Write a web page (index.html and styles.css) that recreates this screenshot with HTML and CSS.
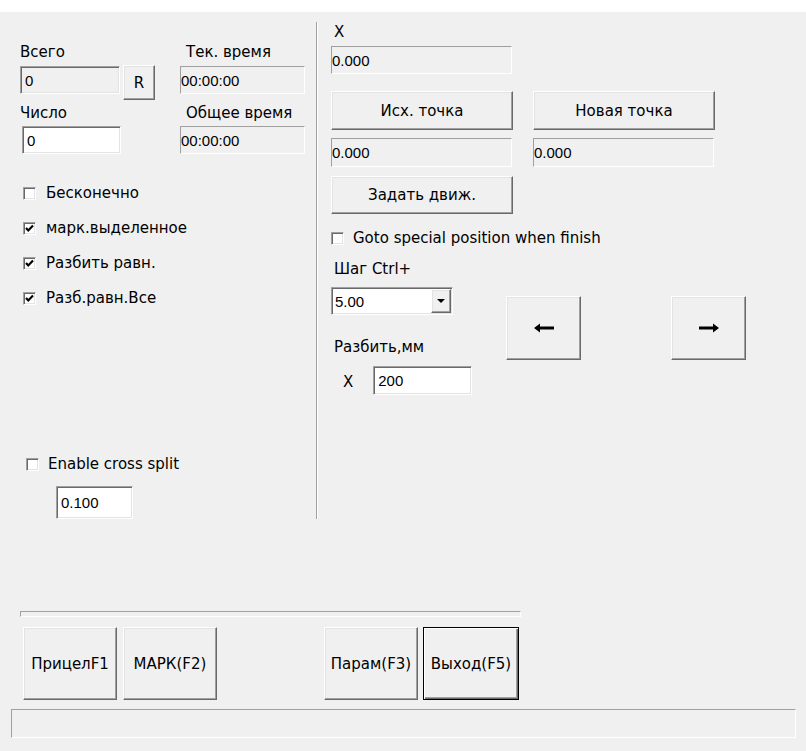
FILE: index.html
```html
<!DOCTYPE html>
<html lang="ru">
<head>
  <meta charset="UTF-8" />
  <title>Mark</title>
  <link rel="stylesheet" href="styles.css">
</head>
<body>

  <div class="titlebar"><div class="titlebar-text">Mark</div></div>

  <div class="panels">
    <div class="left-panel">
      <div class="counters">
        <div class="label">Всего</div>
        <div></div>
        <div class="label label-time">Тек. время</div>

        <input class="edit edit-total" value="0" disabled>
        <button class="btn btn-reset">R</button>
        <div class="static">00:00:00</div>

        <div class="label label-low">Число</div>
        <div></div>
        <div class="label label-time label-low">Общее время</div>

        <input class="edit edit-count" value="0">
        <div></div>
        <div class="static">00:00:00</div>
      </div>

      <div class="options">
        <div class="option"><span class="check"></span>Бесконечно</div>
        <div class="option">
          <span class="check"><svg width="11" height="11" viewBox="0 0 11 11"><path d="M2 5 L4.3 7.5 L9 2.6" fill="none" stroke="#000" stroke-width="2.2"/></svg></span>марк.выделенное
        </div>
        <div class="option">
          <span class="check"><svg width="11" height="11" viewBox="0 0 11 11"><path d="M2 5 L4.3 7.5 L9 2.6" fill="none" stroke="#000" stroke-width="2.2"/></svg></span>Разбить равн.
        </div>
        <div class="option">
          <span class="check"><svg width="11" height="11" viewBox="0 0 11 11"><path d="M2 5 L4.3 7.5 L9 2.6" fill="none" stroke="#000" stroke-width="2.2"/></svg></span>Разб.равн.Все
        </div>
      </div>

      <div class="option option-cross"><span class="check"></span>Enable cross split</div>
      <input class="edit edit-cross" value="0.100">
    </div>

    <div class="vsep"></div>

    <div class="right-panel">
      <div class="label label-right">X</div>
      <div class="static static-wide static-x">0.000</div>

      <div class="point-row point-buttons">
        <button class="btn btn-point">Исх. точка</button>
        <button class="btn btn-point">Новая точка</button>
      </div>
      <div class="point-row point-values">
        <div class="static static-wide">0.000</div>
        <div class="static static-wide">0.000</div>
      </div>
      <button class="btn btn-point btn-move">Задать движ.</button>

      <div class="option option-goto"><span class="check"></span>Goto special position when finish</div>

      <div class="step-area">
        <div class="step-controls">
          <div class="label label-right">Шаг Ctrl+</div>
          <div class="combo">
            <span class="combo-value">5.00</span>
            <span class="combo-arrow"><svg width="8" height="4" viewBox="0 0 8 4"><path d="M0 0 H8 L4 4 Z" fill="#000"/></svg></span>
          </div>
          <div class="label label-right label-split">Разбить,мм</div>
          <div class="split-row">
            <span class="split-axis">X</span>
            <input class="edit edit-split" value="200">
          </div>
        </div>
        <button class="btn btn-arrow btn-left">
          <svg width="20" height="10" viewBox="0 0 20 10"><path d="M0 5 L6 0.5 V3.5 H20 V6.5 H6 V9.5 Z" fill="#000"/></svg>
        </button>
        <button class="btn btn-arrow btn-right">
          <svg width="20" height="10" viewBox="0 0 20 10"><path d="M20 5 L14 0.5 V3.5 H0 V6.5 H14 V9.5 Z" fill="#000"/></svg>
        </button>
      </div>
    </div>
  </div>

  <div class="hsep"></div>

  <div class="bottom-buttons">
    <button class="btn btn-bottom">ПрицелF1</button>
    <button class="btn btn-bottom btn-mark">МАРК(F2)</button>
    <button class="btn btn-bottom btn-param">Парам(F3)</button>
    <button class="btn btn-bottom btn-default">Выход(F5)</button>
  </div>

  <div class="statusbar"></div>

</body>
</html>
```

FILE: styles.css
```css
* { box-sizing: border-box; }

body {
  margin: 0;
  width: 806px;
  height: 751px;
  overflow: hidden;
  background: #f0f0f0;
  color: #000;
  font-family: "DejaVu Sans", sans-serif;
  font-size: 15px;
  line-height: 17px;
}

.titlebar {
  height: 12px;
  background: #fff;
  overflow: hidden;
}

.titlebar-text {
  font-family: "Liberation Sans", sans-serif;
  font-size: 12px;
  line-height: 14px;
  margin-top: -11px;
  padding-left: 1px;
}

.panels {
  display: flex;
  height: 599px;
}

/* 3d bevels, windows classic style */
.edit {
  display: block;
  margin: 0;
  padding: 0 0 0 4px;
  font-family: "Liberation Sans", sans-serif;
  font-size: 15px;
  color: #000;
  background: #fff;
  border: 1px solid;
  border-color: #a0a0a0 #fff #fff #a0a0a0;
  box-shadow: inset 1px 1px #696969, inset -1px -1px #e3e3e3;
  outline: none;
}

.edit:disabled {
  background: #f0f0f0;
  color: #000;
}

.static {
  display: flex;
  align-items: center;
  height: 28px;
  padding-left: 0;
  font-family: "Liberation Sans", sans-serif;
  font-size: 15px;
  border: 1px solid;
  border-color: #a0a0a0 #fff #fff #a0a0a0;
}

.btn {
  margin: 0;
  padding: 0;
  font-family: inherit;
  font-size: 15px;
  color: #000;
  background: #f0f0f0;
  border: 1px solid;
  border-color: #fff #696969 #696969 #fff;
  box-shadow: inset -1px -1px #a0a0a0, inset 1px 1px #e3e3e3;
  display: flex;
  align-items: center;
  justify-content: center;
}

.label {
  line-height: 17px;
  white-space: nowrap;
}

.check {
  width: 13px;
  height: 13px;
  flex: none;
  background: #fff;
  border: 1px solid;
  border-color: #a0a0a0 #fff #fff #a0a0a0;
  box-shadow: inset 1px 1px #696969, inset -1px -1px #e3e3e3;
  display: flex;
  align-items: center;
  justify-content: center;
}

.option {
  display: flex;
  align-items: center;
  gap: 10px;
  height: 35px;
  padding-left: 3px;
  white-space: nowrap;
}

/* left panel */
.left-panel {
  width: 316px;
  flex: none;
  padding: 32px 0 0 20px;
}

.counters {
  display: grid;
  grid-template-columns: 103px 57px 125px;
  grid-template-rows: 22px 28px 32px 28px;
}

.label-time { padding-left: 6px; }

.label-low {
  align-self: end;
  margin-bottom: 4px;
}

.edit-total {
  width: 100px;
  height: 28px;
}

.btn-reset {
  width: 32px;
  height: 35px;
  margin-top: -1px;
}

.edit-count {
  width: 99px;
  height: 28px;
  margin-left: 2px;
}

.options { margin-top: 22px; }

.option-cross {
  margin-top: 131px;
  padding-left: 6px;
  gap: 9px;
}

.edit-cross {
  width: 77px;
  height: 33px;
  margin: 4px 0 0 36px;
}

.vsep {
  width: 2px;
  height: 497px;
  margin-top: 10px;
  border-left: 1px solid #a0a0a0;
  border-right: 1px solid #fff;
}

/* right panel */
.right-panel {
  flex: 1;
  padding: 12px 0 0 13px;
}

.label-right { padding-left: 3px; }

.static-wide { width: 181px; }

.static-x { margin-top: 5px; }

.point-row { display: flex; }

.point-buttons {
  margin-top: 17px;
  gap: 20px;
}

.btn-point {
  width: 182px;
  height: 39px;
}

.point-values {
  margin-top: 8px;
  gap: 21px;
}

.point-values .static { height: 29px; }

.btn-move {
  margin-top: 9px;
  height: 38px;
}

.option-goto {
  margin-top: 16px;
  height: 17px;
  padding-left: 0;
  gap: 9px;
}

.step-area {
  display: flex;
  align-items: flex-start;
  margin-top: 14px;
}

.step-controls {
  width: 122px;
  flex: none;
}

.combo {
  display: flex;
  align-items: center;
  width: 122px;
  height: 28px;
  margin-top: 9px;
  background: #fff;
  border: 1px solid;
  border-color: #a0a0a0 #fff #fff #a0a0a0;
  box-shadow: inset 1px 1px #696969, inset -1px -1px #e3e3e3;
  font-family: "Liberation Sans", sans-serif;
}

.combo-value {
  flex: 1;
  padding-left: 3px;
}

.combo-arrow {
  width: 20px;
  height: 24px;
  margin-right: 1px;
  background: #f0f0f0;
  border: 1px solid;
  border-color: #fff #696969 #696969 #fff;
  box-shadow: inset -1px -1px #a0a0a0, inset 1px 1px #e3e3e3;
  display: flex;
  align-items: center;
  justify-content: center;
}

.label-split { margin-top: 24px; }

.split-row {
  display: flex;
  margin-top: 10px;
}

.split-axis {
  margin: 8px 0 0 12px;
  line-height: 17px;
}

.edit-split {
  width: 99px;
  height: 29px;
  margin-left: 20px;
  flex: none;
}

.btn-arrow {
  width: 75px;
  height: 64px;
  margin-top: 35px;
  flex: none;
}

.btn-left { margin-left: 53px; }
.btn-right { margin-left: 90px; }

/* bottom */
.hsep {
  width: 501px;
  height: 6px;
  margin-left: 20px;
  border: 1px solid;
  border-color: #a0a0a0 #fff #fff #a0a0a0;
}

.bottom-buttons {
  display: flex;
  margin-top: 10px;
  padding-left: 23px;
}

.btn-bottom {
  width: 94px;
  height: 73px;
}

.btn-mark { margin-left: 6px; }
.btn-param { margin-left: 107px; }

.btn-default {
  width: 96px;
  margin-left: 5px;
  border-color: #000;
  box-shadow: inset 1px 1px #fff, inset -1px -1px #696969, inset -2px -2px #a0a0a0;
}

.statusbar {
  width: 785px;
  height: 29px;
  margin: 9px 0 0 11px;
  border: 1px solid;
  border-color: #a0a0a0 #fff #fff #a0a0a0;
}
```
